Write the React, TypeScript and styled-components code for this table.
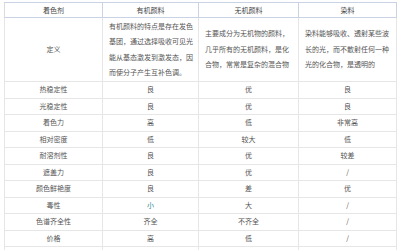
import React from 'react';
import styled, { createGlobalStyle } from 'styled-components';

const GlobalStyle = createGlobalStyle`
  body {
    margin: 0;
    background: #fff;
    font-family: "Noto Sans CJK SC", "Noto Sans", sans-serif;
  }
`;

const Wrap = styled.div`
  padding: 2px 0 0 4px;
`;

const Table = styled.table`
  border-collapse: collapse;
  table-layout: fixed;
  width: 389px;
  font-size: 7px;
  color: #555;
  border-left: 1px solid #d4d4d4;
`;

const Th = styled.th<{ w: number }>`
  width: ${(p) => p.w}px;
  height: 14px;
  padding: 0;
  font-weight: normal;
  color: #444;
  text-align: center;
  border: 1px solid #c9d3e3;
  border-left-color: #dcdcdc;
`;

const Td = styled.td<{ left?: boolean; accent?: boolean }>`
  height: 15px;
  padding: 0 ${(p) => (p.left ? '5px 0 6px' : '2px')};
  line-height: 15.5px;
  text-align: ${(p) => (p.left ? 'left' : 'center')};
  vertical-align: middle;
  color: ${(p) => (p.accent ? '#2f8c8c' : '#555')};
  border: 1px solid #e6e6e6;
  border-top-color: #ececec;
  word-break: break-all;
`;

const DefRow = styled.tr`
  height: 64px;
`;

type Row = [string, string, string, string];

const rows: Row[] = [
  ['热稳定性', '良', '优', '良'],
  ['光稳定性', '良', '优', '良'],
  ['着色力', '高', '低', '非常高'],
  ['相对密度', '低', '较大', '低'],
  ['耐溶剂性', '良', '优', '较差'],
  ['遮盖力', '良', '优', '/'],
  ['颜色鲜艳度', '良', '差', '优'],
  ['毒性', '小', '大', '/'],
  ['色谱齐全性', '齐全', '不齐全', '/'],
  ['价格', '高', '低', '/'],
  ['耐迁移性', '良', '高', '差'],
];

export default function App() {
  return (
    <Wrap>
      <GlobalStyle />
      <Table>
        <thead>
          <tr>
            <Th w={97}>着色剂</Th>
            <Th w={95}>有机颜料</Th>
            <Th w={99}>无机颜料</Th>
            <Th w={97}>染料</Th>
          </tr>
        </thead>
        <tbody>
          <DefRow>
            <Td>定义</Td>
            <Td left>有机颜料的特点是存在发色基团，通过选择吸收可见光能从基态激发到激发态，因而使分子产生互补色调。</Td>
            <Td left>主要成分为无机物的颜料，几乎所有的无机颜料，是化合物，常常是复杂的混合物</Td>
            <Td left>染料能够吸收、透射某些波长的光，而不散射任何一种光的化合物，是透明的</Td>
          </DefRow>
          {rows.map((r) => (
            <tr key={r[0]}>
              <Td>{r[0]}</Td>
              <Td accent={r[1] === '小'}>{r[1]}</Td>
              <Td>{r[2]}</Td>
              <Td>{r[3]}</Td>
            </tr>
          ))}
        </tbody>
      </Table>
    </Wrap>
  );
}
